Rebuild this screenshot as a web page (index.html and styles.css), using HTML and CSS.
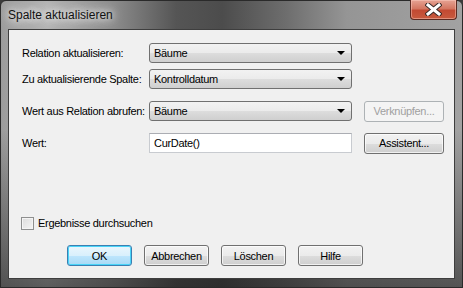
FILE: index.html
```html
<!DOCTYPE html>
<html lang="de">

<head>
    <meta charset="UTF-8">
    <title>Spalte aktualisieren</title>
    <link rel="stylesheet" href="styles.css">
</head>

<body>
    <div class="window">
        <div class="titlebar">
            <span class="title">Spalte aktualisieren</span>
            <button class="close" aria-label="Schließen">
                <svg width="17" height="13" viewBox="0 0 17 13">
                    <path d="M3 2 L14 11 M14 2 L3 11" stroke="#3a2a28" stroke-width="5" stroke-linecap="square" fill="none" />
                    <path d="M3 2 L14 11 M14 2 L3 11" stroke="#ffffff" stroke-width="3" stroke-linecap="square" fill="none" />
                </svg>
            </button>
        </div>

        <div class="client">
            <div class="row">
                <label class="label">Relation aktualisieren:</label>
                <div class="combo"><span>Bäume</span><i class="arrow"></i></div>
            </div>
            <div class="row gap-sm">
                <label class="label">Zu aktualisierende Spalte:</label>
                <div class="combo"><span>Kontrolldatum</span><i class="arrow"></i></div>
            </div>
            <div class="row gap-md">
                <label class="label">Wert aus Relation abrufen:</label>
                <div class="combo"><span>Bäume</span><i class="arrow"></i></div>
                <button class="btn side" disabled>Verknüpfen...</button>
            </div>
            <div class="row gap-md">
                <label class="label">Wert:</label>
                <div class="textbox">CurDate()</div>
                <button class="btn side">Assistent...</button>
            </div>

            <label class="check">
                <span class="box"></span>
                Ergebnisse durchsuchen
            </label>

            <div class="buttons">
                <button class="btn default">OK</button>
                <button class="btn">Abbrechen</button>
                <button class="btn">Löschen</button>
                <button class="btn">Hilfe</button>
            </div>
        </div>
    </div>
</body>

</html>
```

FILE: styles.css
```css
body {
    margin: 0;
    background: #3b3b3b;
    font-family: "Liberation Sans", Arial, sans-serif;
}

.window {
    box-sizing: border-box;
    width: 463px;
    height: 288px;
    padding: 0 7px 8px 7px;
    border-radius: 6px 6px 0 0;
    border: 1px solid #2a2a2a;
    background:
        linear-gradient(to bottom, rgba(0, 0, 0, 0) 0, rgba(0, 0, 0, 0) 45%, rgba(20, 20, 20, 0.55) 100%),
        linear-gradient(to right, #9c9c9c 0, #b4b4b4 10%, #8a8a8a 25%, #555 38%, #4c4c4c 48%, #6e6e6e 62%, #959595 75%, #a2a2a2 100%);
    display: flex;
    flex-direction: column;
}

.titlebar {
    height: 28px;
    display: flex;
    align-items: flex-start;
    justify-content: space-between;
}

.title {
    margin-top: 7px;
    font-size: 12px;
    color: #111;
    text-shadow: 0 0 6px #ececec, 0 0 10px #e4e4e4, 0 0 14px #dcdcdc;
}

.close {
    width: 47px;
    height: 20px;
    margin: -1px -2px 0 0;
    padding: 0;
    border: 1px solid #5a2a22;
    border-top: none;
    border-radius: 0 0 4px 4px;
    background: linear-gradient(to bottom, #e6a394 0, #d47762 45%, #c24a33 55%, #c85a3e 100%);
    box-shadow: inset 0 0 0 1px rgba(255, 210, 200, 0.45);
    display: flex;
    align-items: center;
    justify-content: center;
}

.client {
    flex: 1;
    border: 1px solid #3e3e3e;
    background: #f0f0f0;
    padding: 13px 0 0 13px;
    font-size: 11px;
    letter-spacing: -0.3px;
    color: #000;
}

.row {
    display: flex;
    align-items: center;
    height: 20px;
}

.gap-sm {
    margin-top: 6px;
}

.gap-md {
    margin-top: 12px;
}

.row+.row.gap-md:last-of-type {
    margin-top: 13px;
}

.label {
    width: 127px;
    white-space: nowrap;
}

.combo {
    box-sizing: border-box;
    width: 203px;
    height: 20px;
    border: 1px solid #707070;
    border-radius: 3px;
    background: linear-gradient(to bottom, #f2f2f2 0, #ebebeb 50%, #dddddd 51%, #cfcfcf 100%);
    display: flex;
    align-items: center;
    justify-content: space-between;
    padding: 0 6px 0 4px;
}

.arrow {
    width: 0;
    height: 0;
    border-left: 4px solid transparent;
    border-right: 4px solid transparent;
    border-top: 4px solid #000;
}

.textbox {
    box-sizing: border-box;
    width: 203px;
    height: 20px;
    border: 1px solid #c8cbd0;
    border-top-color: #abadb3;
    background: #fff;
    padding: 0 4px;
    line-height: 18px;
}

.btn {
    box-sizing: border-box;
    width: 65px;
    height: 21px;
    padding: 0;
    border: 1px solid #707070;
    border-radius: 3px;
    background: linear-gradient(to bottom, #f2f2f2 0, #ebebeb 50%, #dddddd 51%, #cfcfcf 100%);
    box-shadow: inset 0 0 0 1px rgba(255, 255, 255, 0.7);
    font-family: inherit;
    font-size: 11px;
    letter-spacing: -0.3px;
    color: #000;
}

.btn.side {
    width: 80px;
    margin-left: 12px;
}

.btn:disabled {
    border-color: #adb2b5;
    background: #f4f4f4;
    box-shadow: none;
    color: #a0a0a0;
}

.btn.default {
    border-color: #3c7fb1;
    background: linear-gradient(to bottom, #eaf6fd 0, #d9f0fc 50%, #bee6fd 51%, #a7d9f5 100%);
    box-shadow: inset 0 0 0 1px #48d4f8;
}

.check {
    display: flex;
    align-items: center;
    gap: 4px;
    margin-top: 64px;
    margin-left: -1px;
    height: 12px;
}

.box {
    box-sizing: border-box;
    width: 13px;
    height: 13px;
    border: 1px solid #8e8f8f;
    background: linear-gradient(135deg, #dcdcdc 0, #f4f4f4 100%);
    box-shadow: inset 0 0 0 1px #f4f4f4;
}

.buttons {
    display: flex;
    gap: 12px;
    margin-top: 16px;
    margin-left: 45px;
}
```
